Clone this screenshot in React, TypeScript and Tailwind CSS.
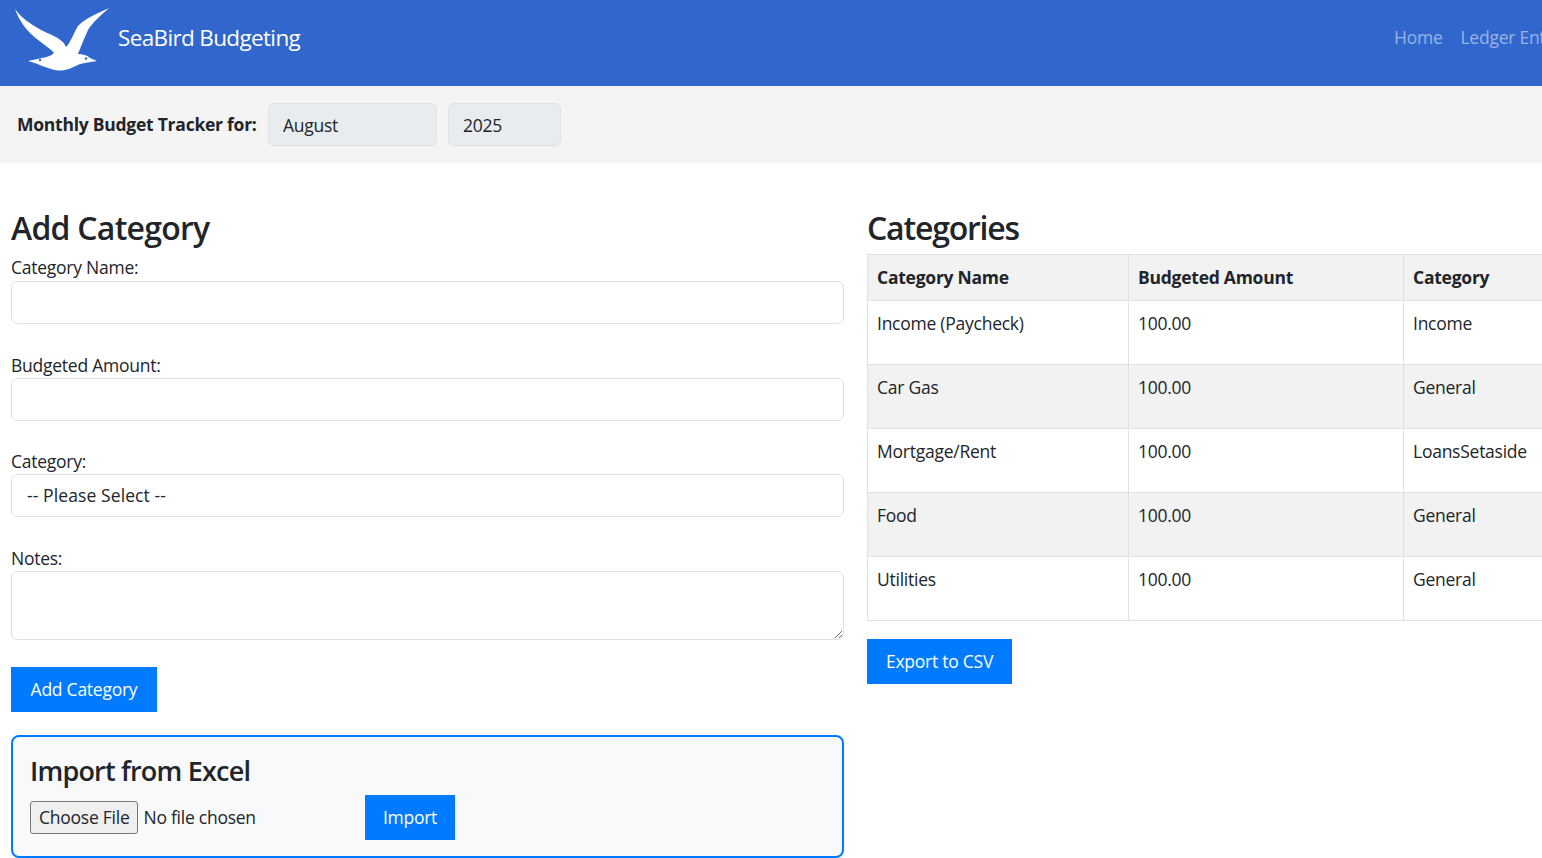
import React from 'react';

const rows = [
  { name: 'Income (Paycheck)', amount: '100.00', category: 'Income' },
  { name: 'Car Gas', amount: '100.00', category: 'General' },
  { name: 'Mortgage/Rent', amount: '100.00', category: 'LoansSetaside' },
  { name: 'Food', amount: '100.00', category: 'General' },
  { name: 'Utilities', amount: '100.00', category: 'General' },
];

const Bird = () => (
  <svg viewBox="0 0 120 86" className="w-[120px] h-[86px] shrink-0">
    <path
      fill="#fff"
      d="M15 9 C22 20 40 30 52 35 C60 39 64 42 66 47 C71 42 74 32 78 26 C84 19 98 13 109 8 C101 15 93 22 88 30 C84 39 81 46 78 54 C82 54 87 55 90 58 L97 61 C90 62 85 63 80 64 C72 68 65 71 58 70.500 C50 70 42 65 28 61 C32 60 38 59 42 58 C47 57 51 56 54 53 C50 48 40 42 31 34 C24 27 18 18 15 9 Z"
    />
    <circle cx="40" cy="60" r="1.2" fill="#3166cc" />
    <circle cx="86" cy="58.500" r="1.2" fill="#3166cc" />
  </svg>
);

const inputClass =
  'block w-full h-[43px] rounded-[6px] border border-[#dee2e6] bg-white px-[15px] text-[#212529] outline-none';

const App: React.FC = () => {
  return (
    <div className="h-[858px] w-[1542px] overflow-hidden bg-white text-[17.500px] leading-[27px] text-[#212529] font-['Open_Sans','Noto_Sans',sans-serif] tracking-[-0.25px]">
      {/* navbar */}
      <nav className="flex h-[86px] items-center bg-[#3166cc]">
        <Bird />
        <span className="-ml-[2px] mb-[12px] text-[22.500px] tracking-[-0.65px] text-white">SeaBird Budgeting</span>
        <div className="mb-[12px] ml-auto flex w-[148px] shrink-0 gap-[18px] overflow-hidden whitespace-nowrap text-white/50">
          <a>Home</a>
          <a>Ledger Entry</a>
        </div>
      </nav>

      {/* month bar */}
      <div className="flex h-[77px] items-center gap-[11px] bg-[#f4f4f4] pl-[17px]">
        <strong className="w-[240px] shrink-0 whitespace-nowrap font-bold">Monthly Budget Tracker for:</strong>
        <input
          readOnly
          value="August"
          className="h-[43px] w-[169px] rounded-[6px] border border-[#dee2e6] bg-[#e9ecef] px-[14px] outline-none"
        />
        <input
          readOnly
          value="2025"
          className="h-[43px] w-[113px] rounded-[6px] border border-[#dee2e6] bg-[#e9ecef] px-[14px] outline-none"
        />
      </div>

      <div className="flex pl-[11px] pt-[43px]">
        {/* add category */}
        <div className="w-[833px] shrink-0">
          <h2 className="text-[32px] font-semibold leading-[44px] tracking-[-0.75px]">Add Category</h2>
          <label className="mt-[4px] block h-[27px]">Category Name:</label>
          <input className={inputClass} />
          <label className="mt-[28px] block h-[26px]">Budgeted Amount:</label>
          <input className={inputClass} />
          <label className="mt-[27px] block h-[26px]">Category:</label>
          <select className={`${inputClass} appearance-none tracking-[0.1px]`}>
            <option>-- Please Select --</option>
          </select>
          <label className="mt-[28px] block h-[26px]">Notes:</label>
          <textarea className="block h-[69px] w-full rounded-[6px] border border-[#dee2e6] bg-white px-[15px] outline-none" />
          <button className="mt-[27px] block h-[45px] w-[146px] bg-[#007bff] text-white">Add Category</button>

          <div className="mt-[23px] h-[123px] rounded-[8px] border-2 border-[#007bff] bg-[#f8f9fa] pl-[17px] pt-[15px]">
            <h3 className="text-[27px] font-semibold leading-[37px] tracking-[-0.8px]">Import from Excel</h3>
            <div className="mt-[6px] flex items-center">
              <input
                type="file"
                className="w-[335px] shrink-0 [&::file-selector-button]:mr-[5px] [&::file-selector-button]:h-[33px] [&::file-selector-button]:rounded-[3px] [&::file-selector-button]:border [&::file-selector-button]:border-[#767676] [&::file-selector-button]:bg-[#efefef] [&::file-selector-button]:px-[8px]"
              />
              <button className="h-[45px] w-[90px] bg-[#007bff] text-white">Import</button>
            </div>
          </div>
        </div>

        {/* categories */}
        <div className="ml-[23px] w-[800px] shrink-0">
          <h2 className="text-[32px] font-semibold leading-[44px] tracking-[-1.2px]">Categories</h2>
          <table className="mt-[4px] w-[800px] table-fixed border-collapse">
            <thead>
              <tr className="h-[46px] bg-[#f2f2f2]">
                <th className="w-[261px] border border-[#dee2e6] px-[9px] text-left font-bold">Category Name</th>
                <th className="w-[275px] border border-[#dee2e6] px-[9px] text-left font-bold">Budgeted Amount</th>
                <th className="border border-[#dee2e6] px-[9px] text-left font-bold">Category</th>
              </tr>
            </thead>
            <tbody>
              {rows.map((row, i) => (
                <tr key={row.name} className={i % 2 === 1 ? 'h-[64px] bg-[#f2f2f2]' : 'h-[64px]'}>
                  <td className="border border-[#dee2e6] px-[9px] pt-[9px] align-top">{row.name}</td>
                  <td className="border border-[#dee2e6] px-[9px] pt-[9px] align-top">{row.amount}</td>
                  <td className="border border-[#dee2e6] px-[9px] pt-[9px] align-top">{row.category}</td>
                </tr>
              ))}
            </tbody>
          </table>
          <button className="mt-[18px] block h-[45px] w-[145px] bg-[#007bff] text-white">Export to CSV</button>
        </div>
      </div>
    </div>
  );
};

export default App;
